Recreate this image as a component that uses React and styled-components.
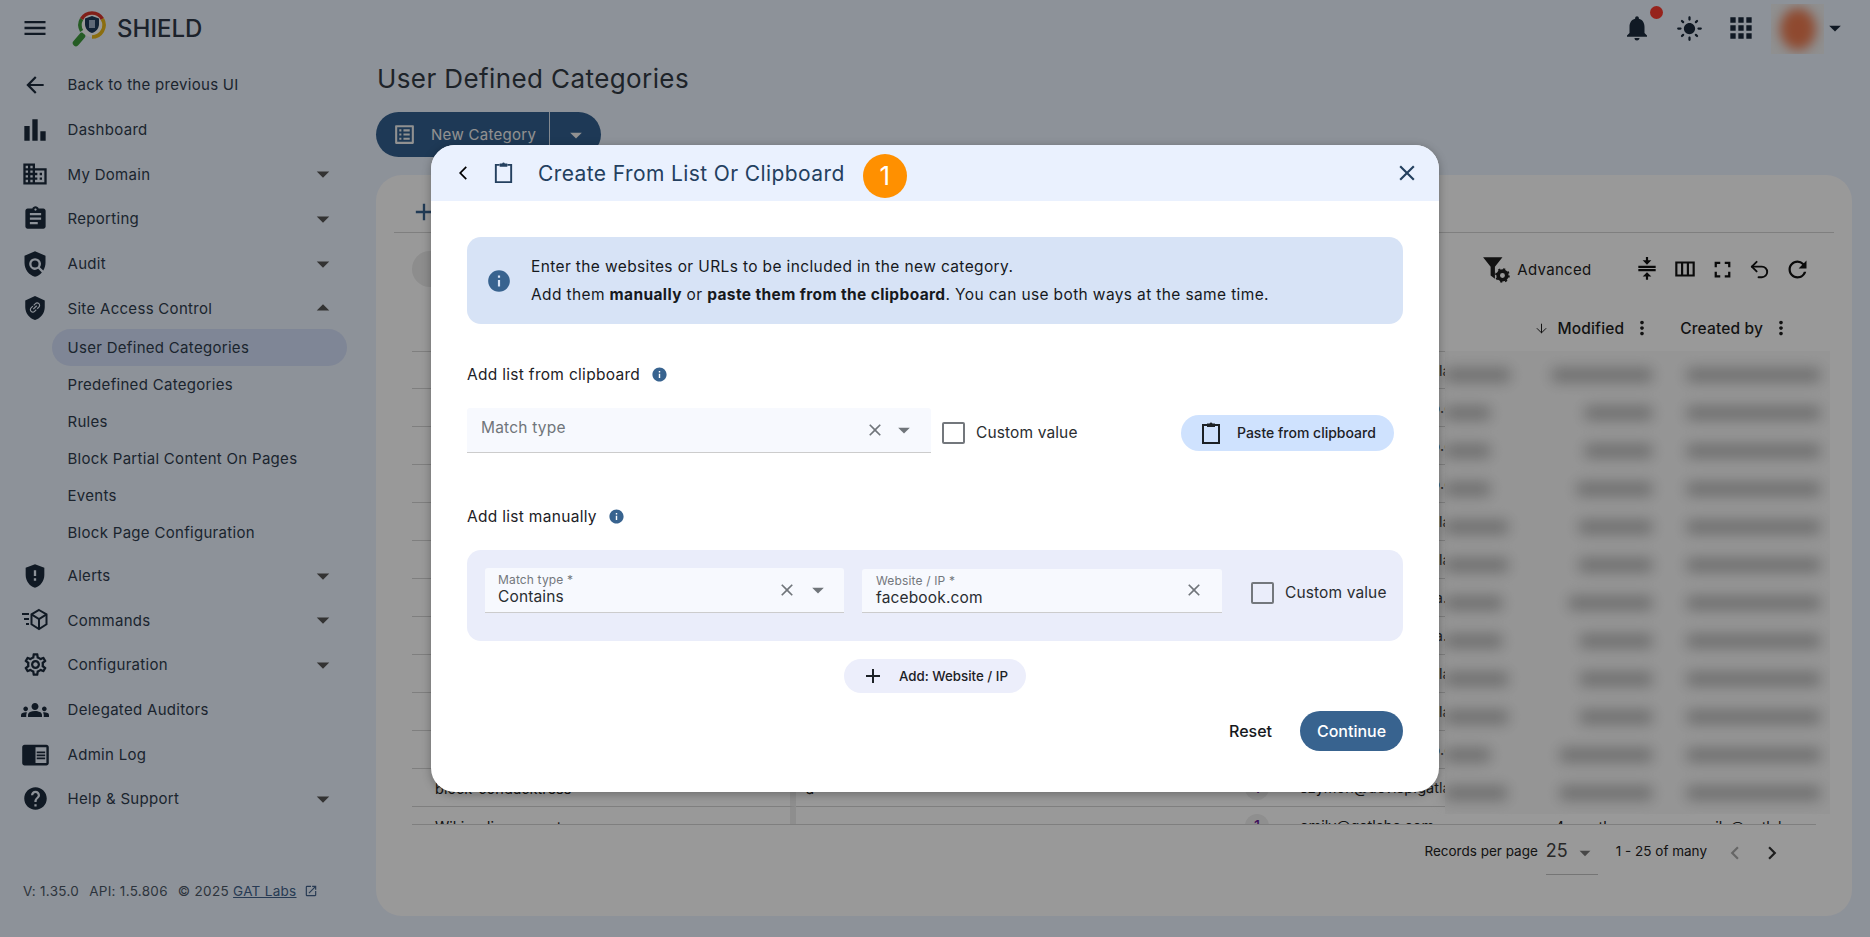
import React from 'react';
import styled, { createGlobalStyle } from 'styled-components';
import {
  MdMenu, MdArrowBack, MdBarChart, MdDomain, MdAssignment, MdArrowDropDown, MdArrowDropUp, MdPolicy,
  MdGppMaybe, MdOutlineSettings, MdGroups, MdChromeReaderMode, MdHelp, MdNotifications, MdLightMode,
  MdApps, MdCompress, MdOutlineViewColumn, MdFullscreen, MdRefresh, MdOutlineListAlt, MdInfo,
  MdArrowBackIosNew, MdClose, MdAdd, MdMoreVert, MdOpenInNew, MdChevronLeft, MdChevronRight,
} from 'react-icons/md';
import { ArrowDown, Undo2 } from 'lucide-react';

const GlobalStyle = createGlobalStyle`
  * { box-sizing: border-box; }
  html, body { margin: 0; height: 100%; }
  body {
    background: #ecf3ff;
    font-family: Inter, "Liberation Sans", sans-serif;
    color: #1f2d3d;
    overflow: hidden;
  }
`;

const ShieldLinkIcon = () => (
  <svg width="26" height="26" viewBox="0 0 24 24">
    <path fill="currentColor" d="M12 1 3 5v6c0 5.55 3.84 10.74 9 12 5.16-1.26 9-6.45 9-12V5z" />
    <g transform="translate(12 11.5) rotate(-45) scale(.56) translate(-12 -12)">
      <path fill="#ecf3ff" d="M3.9 12c0-1.71 1.39-3.1 3.1-3.1h4V7H7c-2.76 0-5 2.24-5 5s2.24 5 5 5h4v-1.9H7c-1.71 0-3.1-1.39-3.1-3.1zM8 13h8v-2H8v2zm9-6h-4v1.9h4c1.71 0 3.1 1.39 3.1 3.1s-1.39 3.1-3.1 3.1h-4V17h4c2.76 0 5-2.24 5-5s-2.24-5-5-5z" />
    </g>
  </svg>
);

const CommandsIcon = () => (
  <svg width="28" height="26" viewBox="0 0 28 26" fill="none" stroke="currentColor" strokeWidth="2">
    <path d="M18 3l7.5 4.3v10L18 22l-7.5-4.7v-10z" />
    <path d="M10.5 7.3L18 12l7.5-4.7M18 12v10" />
    <path d="M1 7h7M3 12h5M5 17h3" />
  </svg>
);

const ClipboardIcon = ({ size = 24 }) => (
  <svg width={size} height={size} viewBox="0 0 24 24" fill="none">
    <path stroke="currentColor" strokeWidth="2" d="M8 4H4v18h16V4h-4" />
    <path fill="currentColor" d="M8 2.5h2.6a1.5 1.5 0 0 1 2.8 0H16V6H8z" />
  </svg>
);

const FilterGearIcon = () => (
  <svg width="28" height="28" viewBox="0 0 26 26">
    <path fill="currentColor" d="M1 2h18l-7 9v11l-4-3v-8z" />
    <circle cx="19" cy="19" r="4" fill="none" stroke="currentColor" strokeWidth="3.4" />
    <circle cx="19" cy="19" r="6" fill="none" stroke="currentColor" strokeWidth="1.6" strokeDasharray="2 2.7" />
  </svg>
);

const Logo = () => (
  <svg width="36" height="38" viewBox="0 0 36 38" fill="none">
    <path stroke="#3f9a3c" strokeWidth="6.5" strokeLinecap="round" d="M10 27l-6 7" />
    <circle cx="20" cy="16" r="12" fill="#fff" />
    <path stroke="#3f9a3c" strokeWidth="3.6" d="M9.6 22A12 12 0 0 1 9.6 10" />
    <path stroke="#d8342b" strokeWidth="3.6" d="M9.6 10A12 12 0 0 1 30.4 10" />
    <path stroke="#e8b71a" strokeWidth="3.6" d="M30.4 10A12 12 0 0 1 20 28" />
    <path fill="#1e3a59" d="M20 7l7 2.6v5.4c0 4.3-3 7.8-7 9-4-1.2-7-4.700-7-9V9.600z" />
    <path fill="#9fb0c6" d="M17 11h6v8h-6z" />
  </svg>
);

const navTop = [
  { label: 'Back to the previous UI', icon: <MdArrowBack size={26} /> },
  { label: 'Dashboard', icon: <MdBarChart size={32} /> },
  { label: 'My Domain', icon: <MdDomain size={28} />, caret: 'down' },
  { label: 'Reporting', icon: <MdAssignment size={27} />, caret: 'down' },
  { label: 'Audit', icon: <MdPolicy size={28} />, caret: 'down' },
  { label: 'Site Access Control', icon: <ShieldLinkIcon />, caret: 'up' },
];

const navSub = ['User Defined Categories', 'Predefined Categories', 'Rules', 'Block Partial Content On Pages', 'Events', 'Block Page Configuration'];

const navBottom = [
  { label: 'Alerts', icon: <MdGppMaybe size={28} />, caret: 'down' },
  { label: 'Commands', icon: <CommandsIcon />, caret: 'down' },
  { label: 'Configuration', icon: <MdOutlineSettings size={27} />, caret: 'down' },
  { label: 'Delegated Auditors', icon: <MdGroups size={28} /> },
  { label: 'Admin Log', icon: <MdChromeReaderMode size={29} /> },
  { label: 'Help & Support', icon: <MdHelp size={27} />, caret: 'down' },
];

// a, b: widths of the first two blurred cells of a row
const rows = [
  { mail: 'szymon@devisp.gatlabs.com', a: 65, b: 100 },
  { mail: 'marek@devisp.gatlp.com', a: 45, b: 67 },
  { mail: 'marek@devisp.gatlp.com', a: 45, b: 67 },
  { mail: 'marek@devisp.gatlp.com', a: 45, b: 75 },
  { mail: 'szymon@devisp.gatlabs.com', a: 63, b: 73 },
  { mail: 'szymon@devisp.gatlabs.com', a: 63, b: 73 },
  { mail: 'andrew@devisp.gala.com', a: 57, b: 83 },
  { mail: 'andrew@devisp.gala.com', a: 57, b: 72 },
  { mail: 'szymon@devisp.gatlabs.com', a: 63, b: 72 },
  { mail: 'szymon@devisp.gatlabs.com', a: 63, b: 72 },
  { mail: 'marek@devisp.gatlp.com', a: 45, b: 92 },
  { mail: 'szymon@devisp.gatlabs.com', a: 62, b: 92, name: 'block-conducktress', type: 'a', count: 1 },
];

const NavEntry = ({ item }) => (
  <NavItem>
    <NavIcon>{item.icon}</NavIcon>
    <NavLabel>{item.label}</NavLabel>
    {item.caret === 'down' && <NavCaret><MdArrowDropDown size={30} /></NavCaret>}
    {item.caret === 'up' && <NavCaret><MdArrowDropUp size={30} /></NavCaret>}
  </NavItem>
);

const App = () => (
  <Page>
    <GlobalStyle />
    <TopBar>
      <MenuButton><MdMenu size={28} /></MenuButton>
      <Logo />
      <Brand>SHIELD</Brand>
      <TopActions>
        <Bell><MdNotifications size={30} /><BellDot /></Bell>
        <TopIcon $w={49.5}><MdLightMode size={27} /></TopIcon>
        <TopIcon $w={46}><MdApps size={32} /></TopIcon>
        <Avatar><AvatarBlur /></Avatar>
        <AvatarCaret><MdArrowDropDown size={28} /></AvatarCaret>
      </TopActions>
    </TopBar>

    <Body>
      <Sidebar>
        {navTop.map((item) => <NavEntry key={item.label} item={item} />)}
        <SubList>
          {navSub.map((label, i) => <SubItem key={label} $active={i === 0}>{label}</SubItem>)}
        </SubList>
        {navBottom.map((item) => <NavEntry key={item.label} item={item} />)}
        <SideFooter>
          <span>V: 1.35.0</span>
          <span>API: 1.5.806</span>
          <span>© 2025 <GatLink>GAT Labs</GatLink></span>
          <GatIcon><MdOpenInNew size={14} /></GatIcon>
        </SideFooter>
      </Sidebar>

      <Main>
        <Title>User Defined Categories</Title>
        <SplitButton>
          <SplitMain><MdOutlineListAlt size={25} />New Category</SplitMain>
          <SplitCaret><MdArrowDropDown size={28} /></SplitCaret>
        </SplitButton>
        <Panel>
          <Tabs><PlusTab><MdAdd size={28} /></PlusTab></Tabs>
          <Toolbar>
            <SearchPill />
            <ToolActions>
              <AdvancedButton><FilterGearIcon />Advanced</AdvancedButton>
              <ToolIcon><MdCompress size={26} /></ToolIcon>
              <ToolIcon><MdOutlineViewColumn size={26} /></ToolIcon>
              <ToolIcon><MdFullscreen size={27} /></ToolIcon>
              <ToolIcon><Undo2 size={23} strokeWidth={2} /></ToolIcon>
              <ToolIcon><MdRefresh size={27} /></ToolIcon>
            </ToolActions>
          </Toolbar>
          <HeaderRow>
            <ArrowDown size={15} strokeWidth={1.6} />
            <HeadLabel>Modified</HeadLabel>
            <MdMoreVert size={22} />
            <HeadLabel $ml={27}>Created by</HeadLabel>
            <MdMoreVert size={22} />
          </HeaderRow>
          <TableBody>
            {rows.map((row, i) => (
              <Row key={i}>
                <NameCell>{row.name}</NameCell>
                <TypeCell>{row.type}</TypeCell>
                <CountCell>{row.count && <CountBadge>{row.count}</CountBadge>}</CountCell>
                <MailCell>{row.mail}</MailCell>
                <BlurCell>
                  <BlurBar style={{ width: row.a }} />
                  <BlurBar style={{ width: row.b, marginLeft: 207 - row.a - row.b }} />
                  <BlurBar style={{ width: 133, marginLeft: 35 }} />
                </BlurCell>
              </Row>
            ))}
            <Row>
              <NameCell>Wikipedia account</NameCell>
              <TypeCell />
              <CountCell><CountBadge>1</CountBadge></CountCell>
              <MailCell>emily@gatlabs.com</MailCell>
              <LastCell>
                <AgoText>4 months ago</AgoText>
                <span>emily@gatlabs.com</span>
              </LastCell>
            </Row>
          </TableBody>
          <Pager>
            <span>Records per page</span>
            <PerPage>25<MdArrowDropDown size={26} /></PerPage>
            <PagerCount>1 - 25 of many</PagerCount>
            <PagerArrow $off><MdChevronLeft size={26} /></PagerArrow>
            <PagerArrow><MdChevronRight size={26} /></PagerArrow>
          </Pager>
        </Panel>
      </Main>
    </Body>

    <Overlay>
      <Modal>
        <ModalHeader>
          <BackIcon><MdArrowBackIosNew size={16} /></BackIcon>
          <HeaderClip><ClipboardIcon size={23} /></HeaderClip>
          <ModalTitle>Create From List Or Clipboard</ModalTitle>
          <StepBadge>1</StepBadge>
          <CloseIcon><MdClose size={26} /></CloseIcon>
        </ModalHeader>
        <ModalBody>
          <InfoBox>
            <MdInfo size={26} color="#38638f" />
            <InfoText>
              <div>Enter the websites or URLs to be included in the new category.</div>
              <div>Add them <b>manually</b> or <b>paste them from the clipboard</b>. You can use both ways at the same time.</div>
            </InfoText>
          </InfoBox>

          <SectionLabel $mt={37.3}>Add list from clipboard <MdInfo size={17} color="#38638f" /></SectionLabel>
          <ClipRow>
            <SelectField $w={464} $h={45} $pad={14}>
              <Placeholder>Match type</Placeholder>
              <FieldIcons $gap={5} $pr={13}>
                <MdClose size={20} /><MdArrowDropDown size={28} />
              </FieldIcons>
            </SelectField>
            <Check />
            <CheckLabel>Custom value</CheckLabel>
            <PasteButton><ClipboardIcon size={24} />Paste from clipboard</PasteButton>
          </ClipRow>

          <SectionLabel $mt={45.500}>Add list manually <MdInfo size={17} color="#38638f" /></SectionLabel>
          <ManualBox>
            <SelectField $w={359} $h={45} $pad={13}>
              <FloatValue>
                <FloatLabel>Match type *</FloatLabel>
                <Value>Contains</Value>
              </FloatValue>
              <FieldIcons $gap={7} $pr={12}>
                <MdClose size={20} /><MdArrowDropDown size={28} />
              </FieldIcons>
            </SelectField>
            <SelectField $w={360} $h={44} $pad={14} $ml={18} $mt={1}>
              <FloatValue>
                <FloatLabel>Website / IP *</FloatLabel>
                <Value>facebook.com</Value>
              </FloatValue>
              <FieldIcons $gap={0} $pr={18}><MdClose size={20} /></FieldIcons>
            </SelectField>
            <Check $ml={29} />
            <CheckLabel>Custom value</CheckLabel>
          </ManualBox>

          <AddRow>
            <AddButton><MdAdd size={24} />Add: Website / IP</AddButton>
          </AddRow>

          <ModalFooter>
            <ResetButton>Reset</ResetButton>
            <ContinueButton>Continue</ContinueButton>
          </ModalFooter>
        </ModalBody>
      </Modal>
    </Overlay>
  </Page>
);

const Page = styled.div`
  width: 1870px;
  height: 937px;
  display: flex;
  flex-direction: column;
  position: relative;
  overflow: hidden;
`;

const TopBar = styled.header`
  height: 56px;
  flex: none;
  display: flex;
  align-items: center;
  padding-left: 21px;
  color: #1b2b3c;
`;

const MenuButton = styled.div`
  width: 51px;
  display: flex;
`;

const Brand = styled.div`
  margin-left: 9px;
  font-size: 24px;
  font-weight: 500;
  color: #2f3a48;
`;

const TopActions = styled.div`
  margin-left: auto;
  display: flex;
  align-items: center;
  padding-right: 21px;
`;

const Bell = styled.div`
  position: relative;
  display: flex;
  margin-right: 23.6px;
`;

const BellDot = styled.span`
  position: absolute;
  top: -7px;
  right: -11px;
  width: 13px;
  height: 13px;
  border-radius: 50%;
  background: #fb3b2f;
`;

const TopIcon = styled.div`
  width: ${(p) => p.$w}px;
  display: flex;
`;

const Avatar = styled.div`
  width: 53px;
  height: 50px;
  overflow: hidden;
  margin-top: 2px;
  background: #eef0f1;
  display: flex;
  align-items: center;
  justify-content: center;
`;

const AvatarBlur = styled.div`
  width: 36px;
  height: 42px;
  border-radius: 50%;
  background: #ee7b50;
  filter: blur(6px);
`;

const AvatarCaret = styled.div`
  display: flex;
  margin-left: -3px;
  color: #1b2b3c;
`;

const Body = styled.div`
  flex: 1;
  display: flex;
  min-height: 0;
`;

const Sidebar = styled.aside`
  width: 376px;
  flex: none;
  padding: 6.500px 0 0 18px;
  display: flex;
  flex-direction: column;
`;

const NavItem = styled.div`
  height: 44.7px;
  flex: none;
  display: flex;
  align-items: center;
  padding-right: 38px;
`;

const NavIcon = styled.div`
  width: 34px;
  margin-right: 15.500px;
  display: flex;
  justify-content: center;
  color: #1b2b3c;
`;

const NavLabel = styled.div`
  flex: 1;
  font-size: 15px;
  letter-spacing: .3px;
  color: #2f3d4e;
`;

const NavCaret = styled.div`
  display: flex;
  color: #555;
`;

const SubList = styled.div`
  display: flex;
  flex-direction: column;
  margin-top: -2px;
  margin-bottom: 2px;
`;

const SubItem = styled.div`
  margin-left: 34px;
  width: 295px;
  height: 37.100px;
  flex: none;
  padding-left: 15.500px;
  display: flex;
  align-items: center;
  border-radius: 19px;
  font-size: 15px;
  letter-spacing: .3px;
  color: #2f3d4e;
  background: ${(p) => (p.$active ? '#d4e0fa' : 'transparent')};
`;

const SideFooter = styled.div`
  margin-top: 62px;
  margin-left: 5px;
  display: flex;
  align-items: center;
  gap: 10px;
  font-size: 13.500px;
  letter-spacing: .3px;
  color: #4c5866;
  white-space: nowrap;
`;

const GatLink = styled.a`
  color: #41628a;
  text-decoration: underline;
`;

const GatIcon = styled.span`
  display: flex;
  margin-left: -3px;
  color: #41628a;
`;

const Main = styled.main`
  flex: 1;
  min-width: 0;
  padding: 0 18px 21px 0;
  display: flex;
  flex-direction: column;
  align-items: flex-start;
`;

const Title = styled.h1`
  margin: 6px 0 0 1px;
  height: 34px;
  line-height: 34px;
  font-size: 26px;
  letter-spacing: .4px;
  font-weight: 400;
  color: #333b45;
`;

const SplitButton = styled.div`
  margin-top: 16px;
  height: 45px;
  width: 225px;
  flex: none;
  display: flex;
  border-radius: 23px;
  background: #32608f;
  color: #f2f2f2;
`;

const SplitMain = styled.div`
  width: 174px;
  display: flex;
  align-items: center;
  gap: 14px;
  padding-left: 16px;
  font-size: 15px;
  letter-spacing: .3px;
  border-right: 1px solid #dbe5f0;
  padding-bottom: 1px;
`;

const SplitCaret = styled.div`
  flex: 1;
  display: flex;
  align-items: center;
  justify-content: center;
`;

const Panel = styled.section`
  margin-top: 18px;
  flex: 1;
  width: 100%;
  min-height: 0;
  border-radius: 26px;
  background: #fff;
  padding: 0 18px;
  display: flex;
  flex-direction: column;
`;

const Tabs = styled.div`
  height: 58px;
  flex: none;
  border-bottom: 1px solid #d4d4d4;
  display: flex;
  align-items: center;
  padding-left: 16px;
`;

const PlusTab = styled.div`
  display: flex;
  margin-top: 17px;
  color: #38638f;
`;

const Toolbar = styled.div`
  height: 72px;
  flex: none;
  display: flex;
  align-items: center;
  justify-content: space-between;
  padding: 0 18px;
`;

const SearchPill = styled.div`
  width: 400px;
  height: 36px;
  border-radius: 18px;
  background: #ebebeb;
`;

const ToolActions = styled.div`
  display: flex;
  align-items: center;
`;

const AdvancedButton = styled.div`
  display: flex;
  align-items: center;
  gap: 7px;
  margin-right: 37px;
  font-size: 15px;
  letter-spacing: .3px;
  color: #1f1f1f;
`;

const ToolIcon = styled.div`
  width: 37.500px;
  display: flex;
  justify-content: center;
  color: #111;
`;

const HeaderRow = styled.div`
  height: 46px;
  flex: none;
  display: flex;
  align-items: center;
  justify-content: flex-end;
  padding-right: 42px;
  color: #1f1f1f;
`;

const HeadLabel = styled.span`
  font-size: 15.500px;
  font-weight: 500;
  letter-spacing: .15px;
  margin: 0 7px 0 ${(p) => p.$ml || 9}px;
`;

const TableBody = styled.div`
  margin-left: 18px;
  height: 473px;
  flex: none;
  overflow: hidden;
  width: 1418px;
`;

const Row = styled.div`
  height: 38px;
  display: flex;
  align-items: center;
  font-size: 14.500px;
  color: #222;
  &:first-child > div:not(:last-child) { border-top: 1px solid #d4d4d4; }
`;

const NameCell = styled.div`
  width: 384px;
  height: 100%;
  flex: none;
  padding: 11px 0 0 23px;
  border-right: 6px solid #ededed;
  border-bottom: 1px solid #d4d4d4;
`;

const TypeCell = styled.div`
  width: 448px;
  height: 100%;
  flex: none;
  padding: 11px 0 0 10px;
  border-bottom: 1px solid #d4d4d4;
`;

const CountCell = styled.div`
  width: 56px;
  height: 100%;
  flex: none;
  display: flex;
  align-items: center;
  padding-left: 1px;
  border-bottom: 1px solid #d4d4d4;
`;

const CountBadge = styled.span`
  width: 24px;
  height: 24px;
  border-radius: 50%;
  background: #eee;
  color: #6a1b9a;
  display: flex;
  align-items: center;
  justify-content: center;
  font-weight: 500;
`;

const MailCell = styled.div`
  width: 145px;
  height: 100%;
  flex: none;
  padding-top: 10px;
  overflow: hidden;
  white-space: nowrap;
  border-bottom: 1px solid #d4d4d4;
`;

const BlurCell = styled.div`
  width: 385px;
  height: 100%;
  flex: none;
  padding-top: 17px;
  display: flex;
  align-items: flex-start;
  background: #f9f9f9;
`;

const BlurBar = styled.div`
  height: 14px;
  flex: none;
  background: #b8b8b8;
  filter: blur(7px);
`;

const LastCell = styled.div`
  width: 385px;
  height: 100%;
  flex: none;
  padding-top: 11px;
  display: flex;
  background: linear-gradient(#f9f9f9 7px, #fff 7px);
`;

const AgoText = styled.span`
  margin: 0 45px 0 110px;
`;

const Pager = styled.div`
  flex: 1;
  margin: 0 18px;
  border-top: 1px solid #d4d4d4;
  display: flex;
  align-items: flex-start;
  justify-content: flex-end;
  padding: 18px 26px 0 0;
  font-size: 13.500px;
  color: #222;
`;

const PerPage = styled.div`
  margin-left: 8px;
  width: 52px;
  height: 35px;
  margin-top: -3px;
  display: flex;
  align-items: flex-start;
  justify-content: space-between;
  font-size: 18px;
  border-bottom: 1px solid #c4c4c4;
  color: #444;
  svg { color: #777; }
`;

const PagerCount = styled.span`
  margin-left: 18px;
  margin-right: 9px;
`;

const PagerArrow = styled.div`
  width: 37px;
  display: flex;
  justify-content: center;
  margin-top: -3px;
  color: ${(p) => (p.$off ? '#aaa' : '#333')};
`;

const Overlay = styled.div`
  position: absolute;
  inset: 0;
  background: rgba(0, 0, 0, .4);
  display: flex;
  align-items: center;
  justify-content: center;
`;

const Modal = styled.div`
  width: 1008px;
  height: 647px;
  border-radius: 24px;
  background: #fff;
  overflow: hidden;
  box-shadow: 0 2px 10px rgba(0, 0, 0, .3);
  display: flex;
  flex-direction: column;
`;

const ModalHeader = styled.div`
  height: 55.500px;
  flex: none;
  background: #eaf1fe;
  display: flex;
  align-items: center;
  padding: 0 19px 0 24px;
  color: #24405f;
`;

const BackIcon = styled.div`
  display: flex;
  color: #000;
`;

const HeaderClip = styled.div`
  display: flex;
  margin-left: 21px;
`;

const ModalTitle = styled.div`
  margin-left: 23px;
  margin-top: 2px;
  font-size: 21px;
  letter-spacing: .4px;
`;

const StepBadge = styled.div`
  margin-left: 18px;
  width: 44px;
  height: 44px;
  border-radius: 50%;
  background: #ff9000;
  color: #fff;
  font-size: 26px;
  display: flex;
  align-items: center;
  justify-content: center;
  margin-top: 6px;
`;

const CloseIcon = styled.div`
  margin-left: auto;
  display: flex;
`;

const ModalBody = styled.div`
  flex: 1;
  padding: 36.500px 36px 0;
  display: flex;
  flex-direction: column;
`;

const InfoBox = styled.div`
  height: 87px;
  flex: none;
  border-radius: 14px;
  background: #d7e3f6;
  display: flex;
  align-items: center;
  gap: 19px;
  padding-left: 19px;
`;

const InfoText = styled.div`
  font-size: 15.500px;
  line-height: 28px;
  letter-spacing: .37px;
  color: #16191d;
  b { font-weight: 700; }
`;

const SectionLabel = styled.div`
  margin-top: ${(p) => p.$mt}px;
  height: 26px;
  flex: none;
  display: flex;
  align-items: center;
  gap: 11px;
  font-size: 15.500px;
  letter-spacing: .3px;
  color: #1d2126;
`;

const ClipRow = styled.div`
  margin-top: 20.700px;
  height: 50px;
  flex: none;
  display: flex;
  align-items: center;
`;

const SelectField = styled.div`
  width: ${(p) => p.$w}px;
  height: ${(p) => p.$h}px;
  margin-left: ${(p) => p.$ml || 0}px;
  margin-top: ${(p) => p.$mt || 0}px;
  align-self: flex-start;
  flex: none;
  padding-left: ${(p) => p.$pad}px;
  display: flex;
  align-items: center;
  justify-content: space-between;
  background: #f7f9fe;
  border-bottom: 1px solid #ccc;
  border-radius: 3px 3px 0 0;
`;

const Placeholder = styled.span`
  font-size: 15.500px;
  letter-spacing: .2px;
  color: #70757a;
  margin-top: -4px;
`;

const FieldIcons = styled.div`
  display: flex;
  align-items: center;
  gap: ${(p) => p.$gap}px;
  padding-right: ${(p) => p.$pr}px;
  color: #70757a;
`;

const FloatValue = styled.div`
  display: flex;
  flex-direction: column;
  padding-top: 1px;
`;

const FloatLabel = styled.span`
  font-size: 12px;
  line-height: 14px;
  letter-spacing: .15px;
  color: #73777c;
`;

const Value = styled.span`
  font-size: 15.500px;
  line-height: 20px;
  letter-spacing: .15px;
  color: #2a2d31;
`;

const Check = styled.span`
  margin-left: ${(p) => p.$ml || 11}px;
  width: 23px;
  height: 22px;
  flex: none;
  border: 2px solid #73777c;
  border-radius: 2px;
`;

const CheckLabel = styled.span`
  margin-left: 11px;
  font-size: 15.500px;
  letter-spacing: .12px;
  color: #2a2d31;
`;

const PasteButton = styled.div`
  margin-left: auto;
  margin-right: 9px;
  width: 213px;
  height: 36px;
  border-radius: 18px;
  background: #cfe2fe;
  display: flex;
  align-items: center;
  gap: 14px;
  padding-left: 18px;
  font-size: 14px;
  font-weight: 500;
  color: #1c2126;
`;

const ManualBox = styled.div`
  margin-top: 20.500px;
  height: 91px;
  flex: none;
  border-radius: 14px;
  background: #eaedfa;
  padding: 18px 0 0 18px;
  display: flex;
  align-items: flex-start;
  ${Check} { margin-top: 14px; }
  ${CheckLabel} { margin-top: 15px; }
`;

const AddRow = styled.div`
  margin-top: 18px;
  display: flex;
  justify-content: center;
`;

const AddButton = styled.div`
  width: 182px;
  height: 34px;
  border-radius: 17px;
  background: #eceefb;
  display: flex;
  align-items: center;
  gap: 14px;
  padding-left: 17px;
  font-size: 13.300px;
  font-weight: 500;
  color: #1c2126;
`;

const ModalFooter = styled.div`
  margin-top: 18px;
  display: flex;
  justify-content: flex-end;
  align-items: center;
  gap: 28px;
`;

const ResetButton = styled.div`
  font-size: 16px;
  font-weight: 500;
  color: #16191d;
`;

const ContinueButton = styled.div`
  width: 103px;
  height: 40px;
  border-radius: 20px;
  background: #38638f;
  color: #fff;
  font-size: 16px;
  font-weight: 500;
  display: flex;
  align-items: center;
  justify-content: center;
`;

export default App;
